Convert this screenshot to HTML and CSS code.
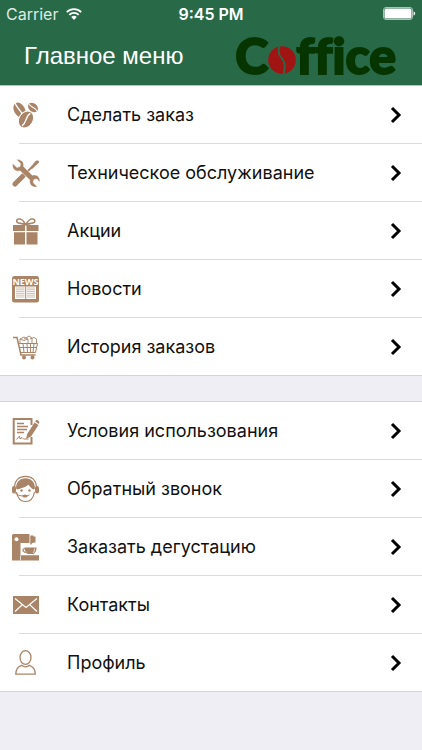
FILE: index.html
```html
<!DOCTYPE html>
<html lang="ru">
<head>
<meta charset="utf-8">
<meta name="viewport" content="width=device-width, initial-scale=1">
<title>Главное меню</title>
<link rel="stylesheet" href="styles.css">
</head>
<body>
<header class="header">
  <div class="status">
    <div class="carrier">Carrier
      <svg class="wifi" viewBox="0 0 16 12" aria-hidden="true"><g fill="none" stroke="#fff" stroke-width="1.8"><path d="M.8 4.2a10.2 10.2 0 0 1 14.4 0"/><path d="M3.3 6.9a6.6 6.6 0 0 1 9.4 0"/></g><path fill="#fff" d="M8 12 5.2 9.1a4 4 0 0 1 5.6 0z"/></svg>
    </div>
    <div class="clock">9:45 PM</div>
    <svg class="battery" viewBox="0 0 33 14" aria-hidden="true"><rect x=".5" y=".5" width="29" height="12" rx="2.5" fill="none" stroke="#a9c4b5"/><rect x="1.5" y="1.5" width="27" height="10" rx="1.5" fill="#fff"/><path fill="#e4eee8" d="M30.5 4.5c2.3.5 2.3 3.500 0 4z"/></svg>
  </div>
  <div class="bar">
    <h1 class="title">Главное меню</h1>
    <div class="logo"><span>C</span><svg class="bean" viewBox="0 0 28 28" role="img" aria-label="o"><circle cx="14" cy="14" r="13.800" fill="#a01414"/><path fill="none" stroke="#286a48" stroke-width="1.800" d="M11.500 0c-2 6-.5 9.500 2.500 12.500 3.500 4 3.500 9 1.500 15.500"/></svg><span>ffice</span></div>
  </div>
</header>
<main>
  <nav class="group">
    <a class="row" href="#order">
      <svg class="icon" viewBox="0 0 28 28" aria-hidden="true">
        <g transform="rotate(-28 7.500 9)"><ellipse cx="7.500" cy="9" rx="5.500" ry="8" fill="#a98467"/><path class="cut" d="M7 1c-2 5 3 9 .5 16"/></g>
        <g transform="rotate(32 14 18.500)"><ellipse cx="14" cy="18.500" rx="7" ry="9" fill="#a98467" stroke="#fff"/><path class="cut" d="M14.500 11c-3 5 2 9-.5 15"/></g>
        <g transform="rotate(-50 21 6.500)"><ellipse cx="21" cy="6.500" rx="4.200" ry="5.400" fill="#a98467"/><path class="cut thin" d="M21 1.500c-1.500 3 1.500 6 0 10"/></g>
      </svg>
      <span class="label">Сделать заказ</span><svg class="chevron" viewBox="0 0 12 18" aria-hidden="true"><path d="m2 2 7 7-7 7"/></svg>
    </a>
    <a class="row" href="#service">
      <svg class="icon" viewBox="0 0 28 28" aria-hidden="true">
        <path fill="none" stroke="#a98467" stroke-width="5" stroke-linecap="round" d="m3 25 8-8"/>
        <path fill="none" stroke="#a98467" stroke-width="2" d="m14 14 7-7"/>
        <path fill="#a98467" d="m18.500 8.500 5-6.500c1-1 3.500-.5 3.500.5 0 1-.5 1.500-1 2l-6 5.500z"/>
        <path fill="#a98467" stroke="#fff" stroke-width=".5" d="M4.500.8 8.500 4.500 8 7.500 5 8.500.8 4.500c-.8 3 .2 5.500 2.200 6.800 1.800 1.100 3.600 1 5 .5l9.800 9.200c-.5 2 0 4 1.500 5.500 1.700 1.600 4 2 6 1.200l-4-4 .5-3 3-.8 3 3.300c.5-2.500-.5-5-2.500-6.400-1.500-1-3.500-1.100-5-.6l-8.800-8.700c.5-2 0-4-1.300-5.300C8.600.8 6.500.200 4.500.8z"/>
      </svg>
      <span class="label">Техническое обслуживание</span><svg class="chevron" viewBox="0 0 12 18" aria-hidden="true"><path d="m2 2 7 7-7 7"/></svg>
    </a>
    <a class="row" href="#promo">
      <svg class="icon" viewBox="0 0 28 28" aria-hidden="true">
        <path fill="#a98467" d="M1 8h12v6H1zM14.500 8h12v6h-12zM2 15.200h11V27.500H2zM14.500 15.200h11V27.500h-11z"/>
        <path fill="none" stroke="#a98467" stroke-width="1.600" d="M13.500 7.500C12 4 9 1.500 6.500 2c-2.500.5-2.500 3.500 0 4 2 .6 5 .8 7 1.500zM14 7.500C15.500 4 18.500 1.500 21 2c2.500.5 2.500 3.500 0 4-2 .6-5 .8-7 1.500z"/>
      </svg>
      <span class="label">Акции</span><svg class="chevron" viewBox="0 0 12 18" aria-hidden="true"><path d="m2 2 7 7-7 7"/></svg>
    </a>
    <a class="row" href="#news">
      <svg class="icon" viewBox="0 0 28 28" aria-hidden="true">
        <rect x="0" y="1" width="27" height="26.500" rx="2.500" fill="#a98467"/>
        <text class="news" x="13.500" y="9.500" text-anchor="middle">NEWS</text>
        <path fill="#fff" d="M3 11.500h21V24H3z"/>
        <path fill="none" stroke="#a98467" stroke-opacity=".65" stroke-width=".8" d="M4 13h8.500M15 13h8M4 14.800h8.500M15 14.800h8M4 16.600h8.500M15 16.600h8M4 18.400h8.500M15 18.400h8M4 20.200h8.500M15 20.200h8M4 22h8.500M15 22h8"/>
        <path stroke="#a98467" stroke-width="1" d="M13.700 11.500V24"/>
      </svg>
      <span class="label">Новости</span><svg class="chevron" viewBox="0 0 12 18" aria-hidden="true"><path d="m2 2 7 7-7 7"/></svg>
    </a>
    <a class="row" href="#history">
      <svg class="icon" viewBox="0 0 28 28" aria-hidden="true">
        <g fill="none" stroke="#a98467">
          <path stroke-width="1.500" d="M1 4.500h4l4 17.500h14.500"/>
          <path d="M7 10.500h18.500l-2 9H9M7.500 14.500h17.500M11 10.500l1 9M15 10.500l.5 9M18.500 10.500v9M22 10.500l-1 9"/>
          <path stroke-width=".9" d="M8 10V6l4-2 4 2v4M12 6l5-3 3 2v5M18 6l4-1.500 2.500 1.500v4M8 6l4 1.500L16 6"/>
        </g>
        <g fill="#a98467"><circle cx="12" cy="24.500" r="2"/><circle cx="20.500" cy="24.500" r="2"/></g>
      </svg>
      <span class="label">История заказов</span><svg class="chevron" viewBox="0 0 12 18" aria-hidden="true"><path d="m2 2 7 7-7 7"/></svg>
    </a>
  </nav>
  <nav class="group">
    <a class="row" href="#terms">
      <svg class="icon" viewBox="0 0 28 28" aria-hidden="true">
        <path fill="none" stroke="#a98467" stroke-width="2" d="M19.500 8V2H1.700v24.500h17.800V20"/>
        <path stroke="#a98467" stroke-width="1.300" d="M5 6.500h7M5 9.500h11M5 12.500h10M5 15.500h7"/>
        <path fill="none" stroke="#a98467" d="m4.500 22.500 3-3.500.5 3 2-1.500 1.500 1.500h5"/>
        <path fill="#a98467" d="m14 22 1.200-5L22.500 5.500l4 2.500L19 19.500zM23.200 4.500l.8-1.300c1-1 3.500.5 3.300 2L26.700 7z"/>
      </svg>
      <span class="label">Условия использования</span><svg class="chevron" viewBox="0 0 12 18" aria-hidden="true"><path d="m2 2 7 7-7 7"/></svg>
    </a>
    <a class="row" href="#callback">
      <svg class="icon" viewBox="0 0 28 28" aria-hidden="true">
        <path fill="none" stroke="#a98467" stroke-width="1.200" d="M2.500 12C3 5 7.500 1.300 13.500 1.300S24 5 24.500 12M4.500 17c1 6 4.500 9.500 9 9.500s8-3.500 9-9.500"/>
        <path fill="#a98467" d="M4 13.500C4 7 8 3.300 13.500 3.300S23 7 23 13.500l-1.500 1C20 13.500 17.500 12 16.500 9.500c-2.500 3-7.500 3.500-11 5z"/>
        <rect x="0" y="11" width="4" height="7.500" rx="2" fill="#a98467"/><rect x="23" y="11" width="4" height="7.500" rx="2" fill="#a98467"/>
        <g fill="#a98467"><circle cx="9.500" cy="15.500" r="1.200"/><circle cx="17.500" cy="15.500" r="1.200"/><ellipse cx="13" cy="21" rx="2.500" ry="1.500"/></g>
        <path fill="none" stroke="#a98467" d="M3 17.500c1.500 2.500 5 3.500 9 3.500m2.500 0c1 0 2-.5 3-1.200"/>
      </svg>
      <span class="label">Обратный звонок</span><svg class="chevron" viewBox="0 0 12 18" aria-hidden="true"><path d="m2 2 7 7-7 7"/></svg>
    </a>
    <a class="row" href="#tasting">
      <svg class="icon" viewBox="0 0 28 28" aria-hidden="true">
        <path fill="#a98467" d="M0 2.500Q0 1 1.500 1h16v9H8.500v12.300H27V27.500H0zM18.300 2.500h3.200v1h2v6h-2V10h-1.500l-.5 1.500h-1.200z"/>
        <circle cx="4.500" cy="6.300" r="2" fill="#fff"/>
        <path stroke="#fff" stroke-width=".7" d="M8.500 22.500V27.500"/>
        <path fill="#a98467" d="M12.500 14.500h12c.3 2.500-1 5-3 6.500h-6c-1.800-1.500-3-4-3-6.500z"/>
        <path fill="none" stroke="#a98467" stroke-width="1.200" d="M13 15.800c-2.800-.6-3 2.800 1 3.700"/>
        <path stroke="#fff" stroke-width=".7" d="M22.500 15.500c0 2-.5 3.500-1.500 4.500" fill="none"/>
      </svg>
      <span class="label">Заказать дегустацию</span><svg class="chevron" viewBox="0 0 12 18" aria-hidden="true"><path d="m2 2 7 7-7 7"/></svg>
    </a>
    <a class="row" href="#contacts">
      <svg class="icon" viewBox="0 0 28 28" aria-hidden="true">
        <path fill="#a98467" d="M1 5h26v18H1z"/>
        <path fill="none" stroke="#fff" stroke-width="1.200" d="m3 7.500 11 9 11-9M3 20.500l7-6.500M25 20.500 18 14"/>
      </svg>
      <span class="label">Контакты</span><svg class="chevron" viewBox="0 0 12 18" aria-hidden="true"><path d="m2 2 7 7-7 7"/></svg>
    </a>
    <a class="row" href="#profile">
      <svg class="icon" viewBox="0 0 28 28" aria-hidden="true">
        <g fill="none" stroke="#a98467" stroke-width="1.300"><ellipse cx="13.500" cy="8.500" rx="5.500" ry="6.800"/><path d="M9.500 16.300C6 17.500 3.800 20 3.800 25.200h19.500c0-5.200-2.300-7.700-5.800-8.900-2.500 2-5.500 2-8 0z"/></g>
      </svg>
      <span class="label">Профиль</span><svg class="chevron" viewBox="0 0 12 18" aria-hidden="true"><path d="m2 2 7 7-7 7"/></svg>
    </a>
  </nav>
</main>
</body>
</html>
```
FILE: styles.css
```css
* {
  box-sizing: border-box;
}

body {
  margin: 0;
  background: #efeef4;
  color: #111;
  font-family: Inter, "Liberation Sans", sans-serif;
}

.header {
  background: #286a48;
  color: #fff;
  border-bottom: 1px solid #b5c4bc;
}

.status {
  display: grid;
  grid-template-columns: 1fr auto 1fr;
  align-items: center;
  height: 28px;
  padding: 0 6px;
  font-size: 16px;
}

.carrier {
  display: flex;
  align-items: center;
  gap: 8px;
  color: #dfeae4;
}

.wifi {
  width: 16px;
  height: 12px;
}

.clock {
  font-weight: 600;
}

.battery {
  width: 33px;
  height: 14px;
  justify-self: end;
}

.bar {
  display: flex;
  justify-content: space-between;
  align-items: center;
  height: 57px;
  padding: 0 26px 2px 24px;
}

.title {
  margin: 0;
  font: 400 24px "Liberation Sans", sans-serif;
}

.logo {
  display: flex;
  align-items: baseline;
  color: #063500;
  font: 900 50px/55px Lato, sans-serif;
  font-variant-ligatures: none;
  -webkit-text-stroke: 2px #063500;
}

.bean {
  width: 28px;
  height: 28px;
}

.group {
  background: #fff;
  border-bottom: 1px solid #d4d3d8;
}

.group + .group {
  margin-top: 25px;
  border-top: 1px solid #d4d3d8;
}

.row {
  position: relative;
  display: flex;
  align-items: center;
  height: 58px;
  padding: 0 20px 0 12px;
  color: inherit;
  font-size: 18px;
  text-decoration: none;
}

.row:last-child {
  height: 57px;
}

.row:not(:last-child)::after {
  content: "";
  position: absolute;
  left: 19px;
  right: 0;
  bottom: 0;
  border-bottom: 1px solid #dcdcde;
}

.icon {
  width: 28px;
  height: 28px;
}

.label {
  flex: 1;
  margin-left: 27px;
  padding-bottom: 1px;
}

.chevron {
  width: 12px;
  height: 18px;
  fill: none;
  stroke: #000;
  stroke-width: 3;
}

.cut {
  fill: none;
  stroke: #fff;
  stroke-width: 1.3;
}

.thin {
  stroke-width: 1;
}

.news {
  fill: #fff;
  font: 700 9px "Open Sans", sans-serif;
}
```
